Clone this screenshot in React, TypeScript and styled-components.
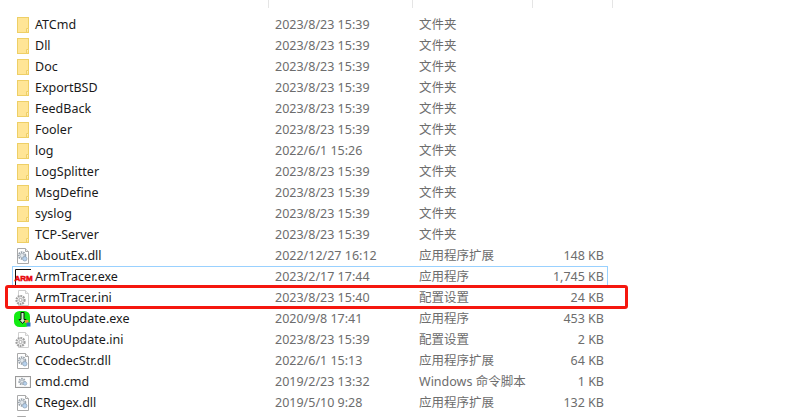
import React from "react";
import styled, { createGlobalStyle } from "styled-components";

const GlobalStyle = createGlobalStyle`
  html, body {
    margin: 0;
    background: #fff;
    font-family: "Noto Sans", "Noto Sans CJK SC", sans-serif;
  }
`;

const Page = styled.div`
  position: relative;
  width: 800px;
  height: 417px;
  overflow: hidden;
  background: #fff;
`;

const HeaderBar = styled.div`
  display: grid;
  grid-template-columns: 269px 144px 120px 80px;
  height: 8px;
`;

const HeaderCell = styled.div`
  border-right: 1px solid #e5e5e5;
`;

const FileList = styled.ul`
  list-style: none;
  margin: 6px 0 0 12px;
  padding: 0;
  width: 596px;
`;

const Row = styled.li<{ $selected?: boolean }>`
  display: grid;
  grid-template-columns: 263px 144px 113px 1fr;
  align-items: center;
  box-sizing: border-box;
  height: 21px;
  padding-right: 4px;
  font-size: 12.5px;
  line-height: 21px;
  white-space: nowrap;
  color: #6d6d6d;
  box-shadow: ${({ $selected }) => ($selected ? "inset 0 0 0 1px #99d1ff" : "none")};
`;

const NameCell = styled.div`
  display: flex;
  align-items: center;
  gap: 4px;
  padding-left: 3px;
  color: #1a1a1a;
`;

const IconBox = styled.svg`
  flex: none;
  display: block;
  width: 16px;
  height: 16px;
  overflow: visible;
`;

const SizeCell = styled.div`
  text-align: right;
`;

const Highlight = styled.div`
  position: absolute;
  left: 5px;
  top: 285px;
  width: 623px;
  height: 24px;
  box-sizing: border-box;
  border: 3px solid #f5170f;
  border-radius: 3px;
`;

const FolderIcon = () => (
  <IconBox viewBox="0 0 16 16">
    <rect x="2.5" y="0.5" width="11" height="15" fill="#ffe596" stroke="#eecf66" />
    <path d="M11.500 15.500V11.500h2" fill="#fff0bf" stroke="#eecf66" />
  </IconBox>
);

const Gear = ({ cx, cy, r }: { cx: number; cy: number; r: number }) => (
  <g>
    <circle cx={cx} cy={cy} r={r} fill="none" stroke="#98a2ab" strokeWidth="1.800" strokeDasharray="1.600 0.800" />
    <circle cx={cx} cy={cy} r={r - 1.300} fill="#e3e8ec" stroke="#8d99a5" strokeWidth="0.600" />
  </g>
);

const DllIcon = () => (
  <IconBox viewBox="0 0 16 16">
    <path d="M2.500 0.500h8l3 3v12h-11z" fill="#fff" stroke="#a9a9a9" />
    <path d="M10.500 0.500v3h3" fill="#eee" stroke="#a9a9a9" />
    <Gear cx={7} cy={7.500} r={3.400} />
    <circle cx={9.800} cy={10.800} r={2.200} fill="#b7d2ee" stroke="#8fa3b8" strokeWidth="0.800" />
  </IconBox>
);

const IniIcon = () => (
  <IconBox viewBox="0 0 16 16">
    <path d="M3.500 0.500h7l3 3v12h-10z" fill="#fff" stroke="#cfcfcf" />
    <path d="M10.500 0.500v3h3" fill="#f2f2f2" stroke="#cfcfcf" />
    <circle cx="5.500" cy="10" r="4" fill="#f4f4f4" stroke="#a0a0a0" strokeWidth="2.200" strokeDasharray="1.800 0.800" />
    <circle cx="5.500" cy="10" r="1.600" fill="#fff" stroke="#999" strokeWidth="0.800" />
  </IconBox>
);

const ArmIcon = () => (
  <IconBox viewBox="0 0 16 16">
    <rect x="0" y="0" width="16" height="16" fill="#fff" />
    <path d="M0.500 16V0.500H16" fill="none" stroke="#111" />
    <text
      x="8.500"
      y="12"
      textAnchor="middle"
      fontFamily="Liberation Sans"
      fontWeight="700"
      fontSize="8"
      fill="#e8060c"
      stroke="#e8060c"
      strokeWidth="0.500"
    >
      ARM
    </text>
  </IconBox>
);

const UpdateIcon = () => (
  <IconBox viewBox="0 0 16 16">
    <rect x="-1" y="0" width="16" height="16" rx="5.500" fill="#12ec12" />
    <path d="M6 1.500h3v7h2l-3.500 4-3.500-4h2z" fill="#c8f5c8" stroke="#111" />
    <rect x="10" y="9" width="3.500" height="3" fill="#e89a2c" />
    <rect x="11.500" y="11.500" width="4" height="4" fill="#2d6fc4" />
  </IconBox>
);

const CmdIcon = () => (
  <IconBox viewBox="0 0 16 16">
    <rect x="0.500" y="2.500" width="15" height="11" fill="#f3f3f3" stroke="#9a9a9a" />
    <rect x="2" y="4" width="12" height="8" fill="#fff" />
    <Gear cx={7} cy={7.500} r={2.800} />
    <circle cx={10} cy={9.500} r={1.800} fill="#b7d2ee" stroke="#8fa3b8" strokeWidth="0.700" />
  </IconBox>
);

type IconKind = "folder" | "dll" | "ini" | "arm" | "update" | "cmd";

const icons: Record<IconKind, React.FC> = {
  folder: FolderIcon,
  dll: DllIcon,
  ini: IniIcon,
  arm: ArmIcon,
  update: UpdateIcon,
  cmd: CmdIcon,
};

interface FileEntry {
  name: string;
  date: string;
  type: string;
  size?: string;
  icon: IconKind;
  selected?: boolean;
}

const folder = (name: string, date = "2023/8/23 15:39"): FileEntry => ({
  name,
  date,
  type: "文件夹",
  icon: "folder",
});

const files: FileEntry[] = [
  folder("ATCmd"),
  folder("Dll"),
  folder("Doc"),
  folder("ExportBSD"),
  folder("FeedBack"),
  folder("Fooler"),
  folder("log", "2022/6/1 15:26"),
  folder("LogSplitter"),
  folder("MsgDefine"),
  folder("syslog"),
  folder("TCP-Server"),
  { name: "AboutEx.dll", date: "2022/12/27 16:12", type: "应用程序扩展", size: "148 KB", icon: "dll" },
  { name: "ArmTracer.exe", date: "2023/2/17 17:44", type: "应用程序", size: "1,745 KB", icon: "arm", selected: true },
  { name: "ArmTracer.ini", date: "2023/8/23 15:40", type: "配置设置", size: "24 KB", icon: "ini" },
  { name: "AutoUpdate.exe", date: "2020/9/8 17:41", type: "应用程序", size: "453 KB", icon: "update" },
  { name: "AutoUpdate.ini", date: "2023/8/23 15:39", type: "配置设置", size: "2 KB", icon: "ini" },
  { name: "CCodecStr.dll", date: "2022/6/1 15:13", type: "应用程序扩展", size: "64 KB", icon: "dll" },
  { name: "cmd.cmd", date: "2019/2/23 13:32", type: "Windows 命令脚本", size: "1 KB", icon: "cmd" },
  { name: "CRegex.dll", date: "2019/5/10 9:28", type: "应用程序扩展", size: "132 KB", icon: "dll" },
  { name: "", date: "", type: "", icon: "dll" },
];

export default function App() {
  return (
    <Page>
      <GlobalStyle />
      <HeaderBar>
        <HeaderCell />
        <HeaderCell />
        <HeaderCell />
        <HeaderCell />
      </HeaderBar>
      <FileList>
        {files.map((file, i) => {
          const Icon = icons[file.icon];
          return (
            <Row key={i} $selected={file.selected}>
              <NameCell>
                <Icon />
                {file.name}
              </NameCell>
              <div>{file.date}</div>
              <div>{file.type}</div>
              <SizeCell>{file.size}</SizeCell>
            </Row>
          );
        })}
      </FileList>
      <Highlight />
    </Page>
  );
}
